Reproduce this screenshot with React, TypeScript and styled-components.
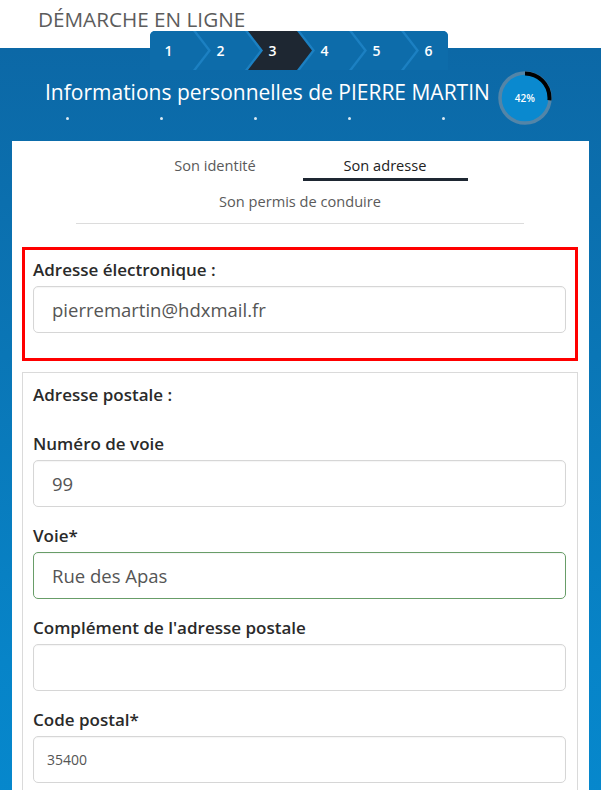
import React from "react";
import styled, { createGlobalStyle } from "styled-components";

const GlobalStyle = createGlobalStyle`
  html, body {
    margin: 0;
    padding: 0;
    background: #ffffff;
  }
  body {
    font-family: "Open Sans", "Liberation Sans", sans-serif;
  }
  * {
    box-sizing: border-box;
  }
`;

const Page = styled.div`
  min-height: 100vh;
  display: flex;
  flex-direction: column;
  overflow: hidden;
`;

const TopTitle = styled.div`
  height: 48px;
  padding: 5px 0 0 38px;
  font-size: 20.7px;
  line-height: 28px;
  color: #5c5c5c;
`;

const Band = styled.div`
  flex: 1;
  background: linear-gradient(to bottom, #0c68a6 0%, #0a76b6 40%, #0784c8 80%, #0688cd 100%);
`;

const Stepper = styled.div`
  width: 298px;
  height: 39px;
  margin: -17px 0 0 150px;
  border-radius: 5px 5px 0 0;
  overflow: hidden;
  background: #1c80c2;
`;

const StepTrack = styled.div`
  display: flex;
  margin-left: -6px;
  height: 100%;
`;

const Step = styled.div<{ $active?: boolean; $first?: boolean; $last?: boolean }>`
  flex: none;
  width: 64px;
  height: 100%;
  margin-right: -12px;
  padding-right: 15px;
  display: flex;
  align-items: center;
  justify-content: center;
  background: ${(p) => (p.$active ? "#1e2732" : "#0d6caa")};
  color: #ffffff;
  font-size: 14px;
  font-weight: 600;
  clip-path: ${(p) =>
    p.$first
      ? "polygon(0 0, 49px 0, 64px 50%, 49px 100%, 0 100%)"
      : p.$last
      ? "polygon(0 0, 100% 0, 100% 100%, 0 100%, 15px 50%)"
      : "polygon(0 0, 49px 0, 64px 50%, 49px 100%, 0 100%, 15px 50%)"};
`;

const TitleRow = styled.div`
  display: flex;
  align-items: flex-start;
  padding-left: 45px;
`;

const TitleBlock = styled.div`
  display: flex;
  flex-direction: column;
`;

const Title = styled.h1`
  margin: 8px 0 0;
  font-size: 21px;
  line-height: 28px;
  font-weight: 400;
  color: #ffffff;
  white-space: nowrap;
`;

const Dots = styled.div`
  display: flex;
  gap: 91px;
  margin: 11px 0 0 21px;
`;

const Dot = styled.span`
  width: 3px;
  height: 3px;
  border-radius: 50%;
  background: rgba(255, 255, 255, 0.85);
`;

const Ring = styled.div`
  position: relative;
  width: 54px;
  height: 54px;
  margin: 1px 0 0 8px;
  flex: none;
`;

const RingLabel = styled.span`
  position: absolute;
  inset: 0;
  display: flex;
  align-items: center;
  justify-content: center;
  color: #ffffff;
  font-size: 10px;
  font-weight: 600;
`;

const Card = styled.div`
  margin: 16px 12px 0;
  background: #ffffff;
  padding: 11px 11px 0 10px;
`;

const TabList = styled.div`
  display: flex;
  flex-wrap: wrap;
  justify-content: center;
  column-gap: 5px;
  row-gap: 7px;
  margin: 0 54px;
  padding-bottom: 6px;
  border-bottom: 1px solid #dcdcdc;
`;

const Tab = styled.div<{ $active?: boolean }>`
  width: 165px;
  height: 29px;
  line-height: 26px;
  text-align: center;
  font-size: 14.6px;
  color: ${(p) => (p.$active ? "#222222" : "#5a5a5a")};
  border-bottom: 3px solid ${(p) => (p.$active ? "#1e2732" : "transparent")};
`;

const EmailBox = styled.div`
  margin-top: 23px;
  border: 3px solid #ff0000;
  padding: 9px 9px 25px 8px;
`;

const PostalBox = styled.div`
  margin-top: 11px;
  border: 1px solid #dadada;
  padding: 11px 11px 30px 10px;
`;

const SectionTitle = styled.div`
  font-size: 17px;
  line-height: 22px;
  font-weight: 600;
  color: #2a2a2a;
  margin-bottom: 27px;
`;

const Field = styled.div`
  & + & {
    margin-top: 18px;
  }
`;

const Label = styled.label`
  display: block;
  font-size: 17px;
  line-height: 22px;
  font-weight: 600;
  color: #2a2a2a;
  margin-bottom: 5px;
`;

const Input = styled.input<{ $valid?: boolean; $small?: boolean }>`
  display: block;
  width: 100%;
  height: 47px;
  border: 1px solid ${(p) => (p.$valid ? "#689d68" : "#d6d6d6")};
  border-radius: 5px;
  padding: 0 0 0 ${(p) => (p.$small ? "13px" : "18px")};
  font-family: "Open Sans", "Liberation Sans", sans-serif;
  font-size: ${(p) => (p.$small ? "14px" : "18.5px")};
  color: #555555;
  background: #ffffff;
  box-shadow: inset 0 1px 1px rgba(0, 0, 0, 0.04);
  outline: none;
`;

const steps = [1, 2, 3, 4, 5, 6];

function ProgressRing() {
  const r = 24.5;
  const c = 2 * Math.PI * r;
  const arc = (95 / 360) * c;
  return (
    <Ring>
      <svg width="54" height="54" viewBox="0 0 54 54">
        <circle cx="27" cy="27" r="25" fill="#0a89cf" stroke="#5385a8" strokeWidth="3.5" />
        <circle
          cx="27"
          cy="27"
          r={r}
          fill="none"
          stroke="#000000"
          strokeWidth="4"
          strokeDasharray={`${arc} ${c}`}
          transform="rotate(-90 27 27)"
        />
      </svg>
      <RingLabel>42%</RingLabel>
    </Ring>
  );
}

export default function App() {
  return (
    <Page>
      <GlobalStyle />
      <TopTitle>DÉMARCHE EN LIGNE</TopTitle>
      <Band>
        <Stepper>
          <StepTrack>
            {steps.map((n, i) => (
              <Step key={n} $active={n === 3} $first={i === 0} $last={i === steps.length - 1}>
                {n}
              </Step>
            ))}
          </StepTrack>
        </Stepper>
        <TitleRow>
          <TitleBlock>
            <Title>Informations personnelles de PIERRE MARTIN</Title>
            <Dots>
              {[0, 1, 2, 3, 4].map((d) => (
                <Dot key={d} />
              ))}
            </Dots>
          </TitleBlock>
          <ProgressRing />
        </TitleRow>
        <Card>
          <TabList>
            <Tab>Son identité</Tab>
            <Tab $active>Son adresse</Tab>
            <Tab>Son permis de conduire</Tab>
          </TabList>
          <EmailBox>
            <Label>Adresse électronique :</Label>
            <Input defaultValue="pierremartin@hdxmail.fr" />
          </EmailBox>
          <PostalBox>
            <SectionTitle>Adresse postale :</SectionTitle>
            <Field>
              <Label>Numéro de voie</Label>
              <Input defaultValue="99" />
            </Field>
            <Field>
              <Label>Voie*</Label>
              <Input $valid defaultValue="Rue des Apas" />
            </Field>
            <Field>
              <Label>Complément de l'adresse postale</Label>
              <Input defaultValue="" />
            </Field>
            <Field>
              <Label>Code postal*</Label>
              <Input $small defaultValue="35400" />
            </Field>
          </PostalBox>
        </Card>
      </Band>
    </Page>
  );
}
